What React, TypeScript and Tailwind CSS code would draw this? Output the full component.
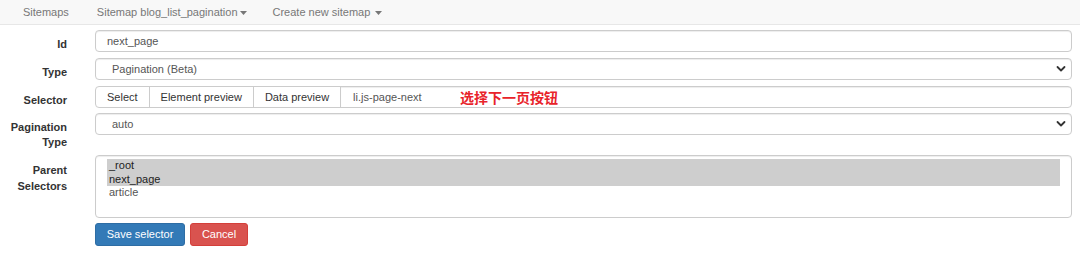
import React from "react";

const font = { fontFamily: '"Liberation Sans", Arial, sans-serif' };

function Caret() {
  return (
    <svg width="7" height="4" viewBox="0 0 7 4" className="inline-block ml-[2px] align-middle">
      <path d="M0 0 L7 0 L3.5 4 Z" fill="#777" />
    </svg>
  );
}

function Chevron() {
  return (
    <svg width="10" height="7" viewBox="0 0 10 7" className="absolute right-[5px] top-1/2 -translate-y-1/2">
      <path d="M1.5 1.5 L5 5 L8.5 1.5" fill="none" stroke="#333" strokeWidth="1.8" strokeLinecap="round" strokeLinejoin="round" />
    </svg>
  );
}

function Label({ children, lh = "leading-[15px]" }: { children: React.ReactNode; lh?: string }) {
  return (
    <div className={`w-[67px] shrink-0 text-right pt-[7px] font-bold text-[11px] ${lh} text-[#333]`}>
      {children}
    </div>
  );
}

const boxCls =
  "h-[22px] flex items-center border border-[#ccc] rounded-[4px] bg-white shadow-[inset_0_1px_1px_rgba(0,0,0,0.075)] text-[11px] text-[#555]";

export default function App() {
  return (
    <div className="w-[1080px] h-[262px] bg-white overflow-hidden" style={font}>
      <div className="h-[25px] bg-[#f8f8f8] border-b border-[#e7e7e7] flex items-center text-[11px] text-[#777]">
        <span className="ml-[23px]">Sitemaps</span>
        <span className="ml-[28px]">
          Sitemap blog_list_pagination
          <Caret />
        </span>
        <span className="ml-[26px]">
          Create new sitemap <Caret />
        </span>
      </div>

      <div className="pt-[5px] pr-[8px]">
        <div className="flex">
          <Label>Id</Label>
          <div className="ml-[28px] flex-1">
            <div className={`${boxCls} pl-[11px]`}>next_page</div>
          </div>
        </div>

        <div className="flex mt-[6px]">
          <Label>Type</Label>
          <div className="ml-[28px] flex-1">
            <div className={`${boxCls} pl-[16px] relative`}>
              Pagination (Beta)
              <Chevron />
            </div>
          </div>
        </div>

        <div className="flex mt-[6px]">
          <Label>Selector</Label>
          <div className="ml-[28px] flex-1 relative">
            <div className="h-[22px] flex border border-[#ccc] rounded-[4px] bg-white text-[11px] overflow-hidden">
              <div className="flex items-center px-[11px] text-[#333] border-r border-[#ccc]">Select</div>
              <div className="flex items-center px-[11px] text-[#333] border-r border-[#ccc]">Element preview</div>
              <div className="flex items-center px-[11px] text-[#333] border-r border-[#ccc]">Data preview</div>
              <div className="flex items-center pl-[12px] text-[#555] flex-1 shadow-[inset_0_1px_1px_rgba(0,0,0,0.075)]">
                li.js-page-next
              </div>
            </div>
            <div
              className="absolute left-[365px] top-[3px] text-[14px] leading-[16px] font-bold text-[#e8232a]"
              style={{ fontFamily: '"Noto Sans CJK SC", "Liberation Sans", sans-serif' }}
            >
              选择下一页按钮
            </div>
          </div>
        </div>

        <div className="flex mt-[5px]">
          <Label>
            Pagination
            <br />
            Type
          </Label>
          <div className="ml-[28px] flex-1">
            <div className={`${boxCls} pl-[16px] relative`}>
              auto
              <Chevron />
            </div>
          </div>
        </div>

        <div className="flex mt-[5px]">
          <Label lh="leading-[16px]">
            Parent
            <br />
            Selectors
          </Label>
          <div className="ml-[28px] flex-1">
            <div className="h-[63px] border border-[#ccc] rounded-[4px] bg-white shadow-[inset_0_1px_1px_rgba(0,0,0,0.075)] pt-[3px] pl-[11px] pr-[11px] text-[11px]">
              <div className="h-[13.5px] leading-[13.5px] bg-[#cecece] text-[#222] pl-[2px]">_root</div>
              <div className="h-[13.5px] leading-[13.5px] bg-[#cecece] text-[#222] pl-[2px]">next_page</div>
              <div className="h-[13.5px] leading-[13.5px] text-[#555] pl-[2px]">article</div>
            </div>
          </div>
        </div>

        <div className="flex mt-[5px] ml-[95px] gap-[5px]">
          <div className="h-[23px] w-[90px] flex items-center justify-center rounded-[3px] bg-[#337ab7] border border-[#2e6da4] text-white text-[11px]">
            Save selector
          </div>
          <div className="h-[23px] w-[58px] flex items-center justify-center rounded-[3px] bg-[#d9534f] border border-[#d43f3a] text-white text-[11px]">
            Cancel
          </div>
        </div>
      </div>
    </div>
  );
}
